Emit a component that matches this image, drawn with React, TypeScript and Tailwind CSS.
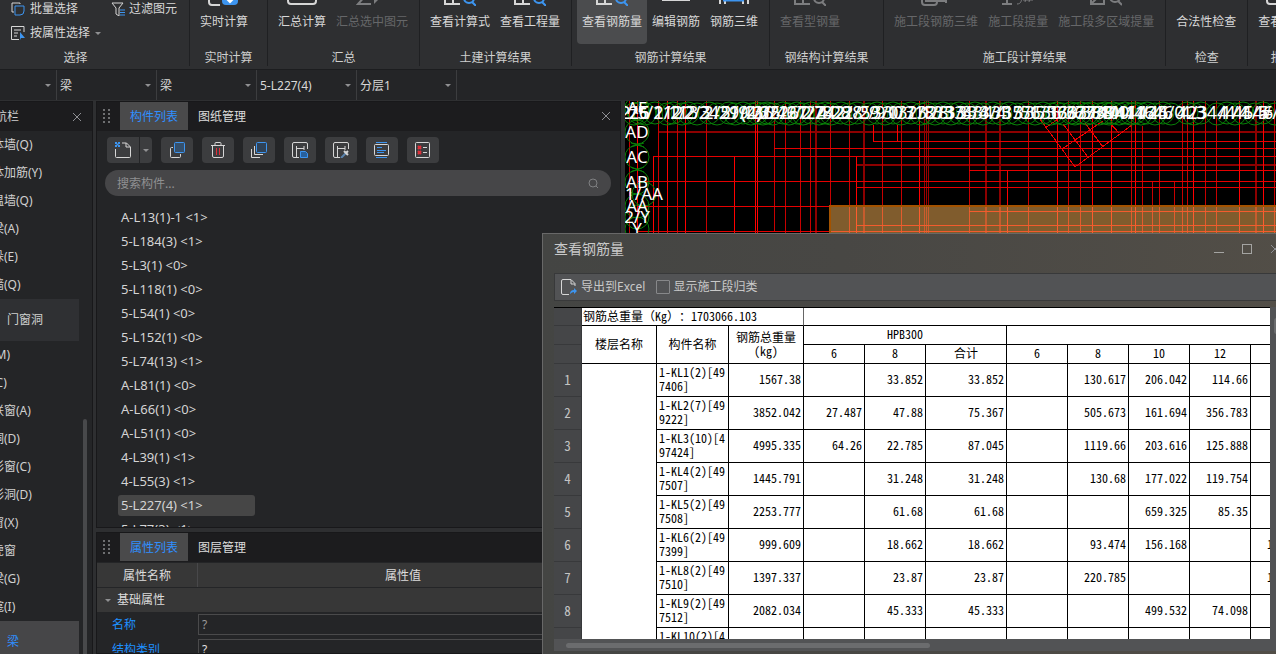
import type { ReactNode } from "react";

const BLUE = "#3d95f0";
const WHITE = "#d6d6d6";
const GRAY = "#7c7d7f";

type RibbonIconName =
  | "realtime"
  | "summary"
  | "sigma"
  | "lookup"
  | "edit"
  | "rebar3d"
  | "stage3d"
  | "stage"
  | "region"
  | "check"
  | "report";

interface RibbonItem {
  label: string;
  icon: RibbonIconName;
  disabled?: boolean;
  active?: boolean;
}

interface RibbonGroupData {
  title: string;
  className?: string;
  items: RibbonItem[];
}

const ribbonGroups: RibbonGroupData[] = [
  {
    title: "实时计算",
    className: "w-[78px]",
    items: [{ label: "实时计算", icon: "realtime" }],
  },
  {
    title: "汇总",
    items: [
      { label: "汇总计算", icon: "summary" },
      { label: "汇总选中图元", icon: "sigma", disabled: true },
    ],
  },
  {
    title: "土建计算结果",
    items: [
      { label: "查看计算式", icon: "lookup" },
      { label: "查看工程量", icon: "lookup" },
    ],
  },
  {
    title: "钢筋计算结果",
    items: [
      { label: "查看钢筋量", icon: "lookup", active: true },
      { label: "编辑钢筋", icon: "edit" },
      { label: "钢筋三维", icon: "rebar3d" },
    ],
  },
  {
    title: "钢结构计算结果",
    className: "w-[114px]",
    items: [{ label: "查看型钢量", icon: "lookup", disabled: true }],
  },
  {
    title: "施工段计算结果",
    items: [
      { label: "施工段钢筋三维", icon: "stage3d", disabled: true },
      { label: "施工段提量", icon: "stage", disabled: true },
      { label: "施工段多区域提量", icon: "region", disabled: true },
    ],
  },
  { title: "检查", items: [{ label: "合法性检查", icon: "check" }] },
  { title: "报表", items: [{ label: "查看报表", icon: "report" }] },
];

const selectors = [
  { name: "楼层", value: "", className: "w-[57px]" },
  { name: "构件大类", value: "梁", className: "w-[100px]" },
  { name: "构件类型", value: "梁", className: "w-[100px]" },
  { name: "构件", value: "5-L227(4)", className: "w-[100px]" },
  { name: "分层", value: "分层1", className: "w-[100px]" },
];

const wallItems = [
  "砌体墙(Q)",
  "砌体加筋(Y)",
  "保温墙(Q)",
  "暗梁(A)",
  "墙垛(E)",
  "幕墙(Q)",
];

const openingItems = [
  "门(M)",
  "窗(C)",
  "门联窗(A)",
  "墙洞(D)",
  "带形窗(C)",
  "带形洞(D)",
  "飘窗(X)",
  "老虎窗",
  "过梁(G)",
  "壁龛(I)",
];

const components = [
  "A-L13(1)-1 <1>",
  "5-L184(3) <1>",
  "5-L3(1) <0>",
  "5-L118(1) <0>",
  "5-L54(1) <0>",
  "5-L152(1) <0>",
  "5-L74(13) <1>",
  "A-L81(1) <0>",
  "A-L66(1) <0>",
  "A-L51(1) <0>",
  "4-L39(1) <1>",
  "4-L55(3) <1>",
  "5-L227(4) <1>",
  "5-L77(3) <1>",
];

const rebarRows: string[][] = [
  ["1-KL1(2)[497406]", "1567.38", "", "33.852", "33.852", "", "130.617", "206.042", "114.66", ""],
  ["1-KL2(7)[499222]", "3852.042", "27.487", "47.88", "75.367", "", "505.673", "161.694", "356.783", ""],
  ["1-KL3(10)[497424]", "4995.335", "64.26", "22.785", "87.045", "", "1119.66", "203.616", "125.888", ""],
  ["1-KL4(2)[497507]", "1445.791", "", "31.248", "31.248", "", "130.68", "177.022", "119.754", ""],
  ["1-KL5(2)[497508]", "2253.777", "", "61.68", "61.68", "", "", "659.325", "85.35", ""],
  ["1-KL6(2)[497399]", "999.609", "", "18.662", "18.662", "", "93.474", "156.168", "", "119.754"],
  ["1-KL8(2)[497510]", "1397.337", "", "23.87", "23.87", "", "220.785", "", "", "130.617"],
  ["1-KL9(2)[497512]", "2082.034", "", "45.333", "45.333", "", "", "499.532", "74.098", ""],
  ["1-KL10(2)[497514]", "", "", "", "", "", "", "", "", ""],
];

function RibbonIcon({ name, color }: { name: RibbonIconName; color: string }) {
  const accent = color === GRAY ? GRAY : BLUE;
  const shapes: Record<RibbonIconName, ReactNode> = {
    realtime: (
      <>
        <path d="M1 6v18q0 3 3 3h8" stroke={color} />
        <rect x="14" y="11" width="16" height="16" rx="4" fill={accent} />
        <path d="M22 15v9m-3-3l3 3 3-3" stroke="#fff" />
      </>
    ),
    summary: <rect x="2" y="4" width="28" height="22" rx="3" stroke={color} />,
    sigma: (
      <>
        <path d="M14 6H3l8 10-9 10h13" stroke={color} />
        <path d="M18 16v10l4-4h6z" fill={color} />
      </>
    ),
    lookup: (
      <>
        <path d="M1 6v20h15M9 6v20" stroke={color} />
        <circle cx="25" cy="20" r="5" stroke={accent} />
        <path d="M28 24l4 4" stroke={accent} />
      </>
    ),
    edit: <path d="M3 6h26v16H3z" stroke={color} />,
    rebar3d: (
      <>
        <path d="M2 8v18M7 8v18M25 8v18M30 8v18" stroke={color} />
        <path d="M5 22h21" stroke={accent} strokeWidth="3" />
      </>
    ),
    stage3d: (
      <>
        <rect x="2" y="10" width="15" height="17" rx="3" stroke={color} />
        <path d="M6 23h20M26 8v17M6 20v3h7" stroke={color} />
      </>
    ),
    stage: (
      <>
        <path d="M0 26h10M5 8v18" stroke={color} />
        <path d="M15 26c4 0 5-3 5-10M23 24l2-8M27 24l2-8M21 22h10" stroke={color} strokeWidth="1" />
      </>
    ),
    region: (
      <>
        <path d="M1 10h13v16H1zM1 26l13-13" stroke={color} />
        <circle cx="25" cy="19" r="5" stroke={color} />
        <path d="M28 23l4 4" stroke={color} />
      </>
    ),
    check: <path d="M6 16l5 6 8-14" stroke={accent} strokeWidth="1" />,
    report: <rect x="1" y="4" width="26" height="22" rx="3" stroke={color} />,
  };
  return (
    <svg width="32" height="28" viewBox="0 0 32 28" fill="none" strokeWidth="2" className="mb-2 shrink-0">
      {shapes[name]}
    </svg>
  );
}

function Caret({ className }: { className?: string }) {
  return (
    <svg width="6" height="3" viewBox="0 0 6 3" className={className}>
      <path d="M0 0h6L3 3z" fill="#8f9092" />
    </svg>
  );
}

function CloseIcon() {
  return (
    <svg width="10" height="10" viewBox="0 0 10 10" stroke="#8e8f93" fill="none">
      <path d="M1 1l8 8M9 1l-8 8" />
    </svg>
  );
}

function Ribbon() {
  return (
    <header className="flex h-[70px] shrink-0 items-end overflow-hidden border-b border-[#1c1d1f] bg-[#2e2f31] pb-[3px]">
      <section className="-ml-[38px] flex h-full w-[228px] shrink-0 flex-col justify-end border-r border-[#1f2022]">
        <div className="mb-[9px] grid gap-2 pl-[49px] text-[#d8d8d8]">
          <div className="flex gap-[33px]">
            <button className="flex h-4 items-center gap-[5px]">
              <svg width="14" height="14" viewBox="0 0 14 14" fill="none">
                <path d="M9 2V1H1v9h2" stroke={WHITE} />
                <path d="M4 4h9v5q0 4-4 4H4z" stroke={BLUE} />
              </svg>
              批量选择
            </button>
            <button className="flex h-4 items-center gap-1">
              <svg width="14" height="14" viewBox="0 0 14 14" fill="none">
                <path d="M1 1h11L8 6v8l-3-2V6z" stroke={WHITE} />
                <path d="M9 8h5M9 10.500h5M9 13h5" stroke={BLUE} />
              </svg>
              过滤图元
            </button>
          </div>
          <button className="flex h-4 items-center gap-[5px]">
            <svg width="14" height="14" viewBox="0 0 14 14" fill="none">
              <path d="M13 6V.500H.500v13H8M3 4h7M3 7h4M3 10h3" stroke={WHITE} />
              <path d="M9 6l5 6h-4l-1 2z" fill={BLUE} />
            </svg>
            按属性选择
            <Caret />
          </button>
        </div>
        <h2 className="text-center text-[#cfcfcf]">选择</h2>
      </section>
      {ribbonGroups.map((group) => (
        <section
          key={group.title}
          className={`flex h-full shrink-0 flex-col justify-end border-r border-[#1f2022] ${group.className ?? ""}`}
        >
          <div className="mb-[6px] flex items-end pr-[6px] pl-[5px]">
            {group.items.map((item) => (
              <button
                key={item.label}
                disabled={item.disabled}
                className={`flex flex-col items-center rounded px-[5px] pb-[14px] ${
                  item.active ? "bg-[#4b4c4e]" : ""
                } ${item.disabled ? "text-[#666769]" : "text-[#d8d8d8]"}`}
              >
                <RibbonIcon name={item.icon} color={item.disabled ? GRAY : WHITE} />
                {item.label}
              </button>
            ))}
          </div>
          <h2 className="text-center text-[#cfcfcf]">{group.title}</h2>
        </section>
      ))}
    </header>
  );
}

function SelectorBar() {
  return (
    <div className="flex h-[30px] shrink-0 bg-[#242527]">
      {selectors.map((s) => (
        <div key={s.name} className={`relative border-r border-[#3c3d3f] ${s.className}`}>
          <select
            aria-label={s.name}
            defaultValue={s.value}
            className="h-full w-full appearance-none bg-transparent pt-px pl-[3px] text-[#d8d8d8] outline-none"
          >
            <option>{s.value}</option>
          </select>
          <Caret className="absolute top-[14px] right-[5px]" />
        </div>
      ))}
    </div>
  );
}

function NavItem({ label }: { label: string }) {
  return (
    <li>
      <a href="#nav" className="flex h-7 items-center">
        {label}
      </a>
    </li>
  );
}

function NavPanel() {
  return (
    <nav className="-ml-5 flex w-[113px] shrink-0 flex-col border-t border-r border-[#18181a] bg-[#242527] text-[#d0d0d0]">
      <div className="flex h-[29px] shrink-0 items-center justify-between bg-[#1c1c1e] pr-[10px] pl-[3px]">
        导航栏
        <button aria-label="关闭导航栏">
          <CloseIcon />
        </button>
      </div>
      <div className="flex min-h-0 flex-1 overflow-hidden">
        <ul className="w-[99px]">
          {wallItems.map((item) => (
            <NavItem key={item} label={item} />
          ))}
          <li className="flex h-[42px] items-center bg-[#2f3033] pl-[27px]">门窗洞</li>
          {openingItems.map((item) => (
            <NavItem key={item} label={item} />
          ))}
          <li className="flex h-[42px] items-center bg-[#464648] pl-[27px] text-[#2f8fff]">梁</li>
        </ul>
        <div className="mt-[288px] ml-1 w-1 rounded-t bg-[#48494b]" />
      </div>
    </nav>
  );
}

function Tabs({ tabs, closable }: { tabs: string[]; closable?: boolean }) {
  return (
    <div className="flex h-[29px] shrink-0 bg-[#1c1c1e] pb-px">
      <svg width="8" height="16" viewBox="0 0 8 16" fill="#6e6f71" className="mt-[7px] mr-[9px] ml-[6px]">
        {[0, 4, 8, 12].map((y) => (
          <path key={y} d={`M0 ${y}h2v2h-2zM5 ${y}h2v2h-2z`} />
        ))}
      </svg>
      {tabs.map((tab, i) => (
        <button
          key={tab}
          className={`w-[68px] pt-[2px] ${i === 0 ? "bg-[#4a4a4b] text-[#2f8fff]" : "text-[#dcdcdc]"}`}
        >
          {tab}
        </button>
      ))}
      {closable && (
        <button aria-label="关闭" className="mr-[9px] ml-auto">
          <CloseIcon />
        </button>
      )}
    </div>
  );
}

const toolIcons: { name: string; drawing: ReactNode }[] = [
  {
    name: "复制",
    drawing: (
      <>
        <path d="M4 5.500H2.500q-1 0-1 1v8q0 1 1 1h8q1 0 1-1V12" stroke={WHITE} />
        <rect x="5.500" y=".500" width="10" height="10" rx="1" fill="#36506b" stroke={BLUE} />
      </>
    ),
  },
  {
    name: "删除",
    drawing: (
      <>
        <path d="M1 3.500h14M5 3V1.500q0-1 1-1h4q1 0 1 1V3M2.500 4v10q0 1.500 1.500 1.500h8q1.500 0 1.500-1.500V4" stroke={WHITE} />
        <path d="M6.500 6v7M9.500 6v7" stroke="#e0303a" />
      </>
    ),
  },
  {
    name: "层间复制",
    drawing: (
      <>
        <path d="M.500 7v8.500H9M3.500 4v8.500H12" stroke={WHITE} />
        <rect x="5.500" y=".500" width="10" height="10" rx="1" fill="#2f4257" stroke={BLUE} />
      </>
    ),
  },
  {
    name: "存档",
    drawing: (
      <>
        <path d="M7 15.500H2q-1.500 0-1.500-1.500V2Q.500.500 2 .500h12q1.500 0 1.500 1.500v5M4.500 15V4M4.500 6.500H12M12 4v4" stroke={WHITE} />
        <path d="M8.500 9.500h5l2 2v4h-7z" fill="#28609c" stroke={BLUE} />
      </>
    ),
  },
  {
    name: "提取",
    drawing: (
      <>
        <path d="M7 15.500H2q-1.500 0-1.500-1.500V2Q.500.500 2 .500h12q1.500 0 1.500 1.500v5M4.500 15V4M4.500 6.500H12M12 4v4" stroke={WHITE} />
        <path d="M8 16l5-5" stroke="#5b83ad" strokeWidth="2" />
        <path d="M11 9l4 4M12.500 11.500L15 9" stroke={WHITE} strokeWidth="2" />
      </>
    ),
  },
  {
    name: "过滤",
    drawing: (
      <>
        <rect x=".500" y="2.500" width="14" height="11" rx="1" stroke={WHITE} />
        <path d="M2 .500h11M2 15.500h11M3 5.500h5M3 8.500h9M3 10.500h7" stroke={BLUE} />
      </>
    ),
  },
  {
    name: "检查",
    drawing: (
      <>
        <rect x=".500" y=".500" width="14" height="15" rx="1" stroke={WHITE} />
        <path d="M8 5.500h4M8 10.500h4" stroke={WHITE} />
        <path d="M3 4l3 3M6 4L3 7M3 9l3 3M6 9l-3 3" stroke="#e0303a" strokeWidth="2" />
      </>
    ),
  },
];

function ComponentPanel() {
  return (
    <section className="flex h-[427px] shrink-0 flex-col overflow-hidden border border-[#18181a] bg-[#242527]">
      <Tabs tabs={["构件列表", "图纸管理"]} closable />
      <div className="mt-[6px] flex shrink-0 gap-[9px] pl-[10px]">
        <div className="flex gap-px">
          <button aria-label="新建" className="flex h-[26px] w-8 items-center justify-center rounded-l bg-[#3c3d3f]">
            <svg width="16" height="16" viewBox="0 0 16 16" fill="none">
              <path d="M.500 7v7.500q0 1 1 1h13q1 0 1-1V5l-4-4H7M11 1v4h4" stroke={WHITE} />
              <path d="M0 0h2v2H0zM3 0h2v2H3zM1.500 1.500h2v2h-2zM0 3h2v2H0zM3 3h2v2H3z" fill={BLUE} />
            </svg>
          </button>
          <button aria-label="新建选项" className="flex h-[26px] w-3 items-center justify-center rounded-r bg-[#3c3d3f]">
            <Caret />
          </button>
        </div>
        {toolIcons.map((tool) => (
          <button
            key={tool.name}
            aria-label={tool.name}
            className="flex h-[26px] w-8 items-center justify-center rounded bg-[#3c3d3f]"
          >
            <svg width="16" height="16" viewBox="0 0 16 16" fill="none">
              {tool.drawing}
            </svg>
          </button>
        ))}
      </div>
      <label className="mr-[9px] ml-2 mt-[7px] flex h-[26px] shrink-0 items-center rounded-full bg-[#464648] px-3">
        <input
          type="text"
          aria-label="搜索构件"
          placeholder="搜索构件..."
          className="min-w-0 flex-1 bg-transparent pt-[2px] outline-none placeholder:text-[#8f9092]"
        />
        <svg width="11" height="11" viewBox="0 0 11 11" fill="none" stroke="#7f8082">
          <circle cx="5" cy="5" r="4" />
          <path d="M8 8l2 2" />
        </svg>
      </label>
      <ul className="mt-[9px] text-[13px] text-[#d4d4d4]">
        {components.map((item) => (
          <li key={item} className="flex h-6 items-center pl-[21px]">
            <span
              className={`w-[137px] rounded-[3px] pl-[3px] leading-[21px] ${
                item.startsWith("5-L227") ? "bg-[#464646]" : ""
              }`}
            >
              {item}
            </span>
          </li>
        ))}
      </ul>
    </section>
  );
}

function PropertyRow({ label, value, dim }: { label: string; value: string; dim?: boolean }) {
  return (
    <label className="flex h-[25px] shrink-0 items-center text-[#1e90ff]">
      <span className="w-[101px] pt-px pl-[15px]">{label}</span>
      <input
        type="text"
        defaultValue={value}
        className={`h-[21px] min-w-0 flex-1 border border-[#4a4a4b] bg-transparent px-[3px] outline-none ${
          dim ? "text-[#9a9a9a]" : "text-[#e0e0e0]"
        }`}
      />
    </label>
  );
}

function PropertyPanel() {
  return (
    <section className="mt-1 flex flex-1 flex-col overflow-hidden border border-[#18181a] bg-[#242527]">
      <Tabs tabs={["属性列表", "图层管理"]} />
      <div className="mt-px flex h-6 shrink-0 bg-[#373737] text-center leading-[26px] text-[#dcdcdc]">
        <span className="w-[101px] border-r border-[#48484a]">属性名称</span>
        <span className="flex-1 pr-3">属性值</span>
      </div>
      <button className="mt-px flex h-6 shrink-0 items-center gap-[6px] bg-[#373737] pl-2 text-[#dcdcdc]">
        <Caret />
        基础属性
      </button>
      <PropertyRow label="名称" value="?" dim />
      <PropertyRow label="结构类别" value="?" />
    </section>
  );
}

// grid lines of the drawing: [x, y1, y2]
const brightColumns = [
  [12, 0, 134], [28, 56, 134], [42, 0, 134], [60, 0, 134], [109, 56, 134],
  [130, 0, 134], [132, 0, 134], [248, 24, 40], [272, 24, 40], [294, 0, 134],
  [382, 69, 134], [432, 0, 134], [467, 0, 134], [486, 0, 134], [510, 0, 134],
  [568, 0, 134], [614, 0, 134], [638, 0, 134], [231, 56, 134],
];
const columns = [
  [4, 0, 134], [33, 0, 134], [52, 0, 134], [81, 0, 134], [149, 0, 130],
  [160, 0, 134], [175, 0, 134], [185, 0, 134], [205, 0, 134], [224, 0, 134],
  [257, 0, 134], [276, 0, 134], [344, 0, 134], [403, 0, 134], [443, 0, 134],
  [455, 0, 134], [506, 0, 134], [517, 25, 134], [527, 80, 134], [534, 0, 134],
  [549, 80, 134], [557, 0, 134], [562, 0, 134], [580, 0, 134], [591, 0, 134],
  [649, 0, 134],
];
const thickColumns = [191, 239, 361, 375, 631];
const darkColumns = [299, 301, 303];
// horizontal lines: [y, x1]
const rows = [
  [40, 248], [47, 149], [55, 28], [69, 344], [80, 12], [86, 231], [105, 12],
  [110, 344], [124, 231], [130, 12],
];
const axisLabels: [number, string][] = [
  [9, "2/5"], [14, "26"], [20, "5"], [30, "/2"], [42, "1/2"], [48, "12"],
  [57, "1/2"], [63, "13"], [72, "2/3"], [84, "24"], [92, "2/5"], [104, "29"],
  [110, "2/9"], [118, "1/4"], [126, "(2)"], [132, "1/2"], [138, "26"], [142, "3/5"],
  [148, "3/4"], [158, "2/6"], [164, "26"], [172, "27"], [178, "/2"], [186, "1/7"],
  [194, "2/8"], [200, "24"], [206, "4/2"], [216, "28"], [224, "2/8"], [232, "2/5"],
  [244, "29"], [252, "/9"], [260, "3/0"], [268, "30"], [276, "1/3"], [286, "3/1"],
  [296, "2/8"], [302, "32"], [310, "1/8"], [318, "33"], [326, "/33"], [334, "3/4"],
  [342, "33"], [350, "3/4"], [358, "34"], [368, "3/4"], [376, "35"], [384, "/35"],
  [392, "1/5"], [402, "3/6"], [410, "35"], [418, "1/5"], [426, "36"], [432, "36"],
  [438, "1/6"], [446, "3/6"], [450, "37"], [456, "3/7"], [462, "37"], [466, "38"],
  [474, "3/8"], [480, "39"], [484, "40"], [488, "1/4"], [494, "40"], [500, "41"],
  [506, "1/4"], [510, "41"], [516, "1/6"], [522, "42"], [530, "/45"], [538, "46"],
  [546, "4/0"], [562, "42"], [569, "4/3"], [576, "3"], [592, "44"], [602, "/4"],
  [610, "1/4"], [618, "45"], [630, "4/5"], [638, "46"], [650, "#/4"],
];
const sideLabels: [number, number, string][] = [
  [12, 7, "AF"], [12, 31, "AD"], [12, 56, "AC"], [12, 81, "AB"], [19, 93, "1/AA"],
  [12, 105, "AA"], [12, 116, "2/Y"], [12, 128, "Y"],
];

function Drawing() {
  return (
    <main className="min-w-0 flex-1 overflow-hidden bg-black">
      <svg width="1200" height="560" viewBox="0 0 1200 560" fill="none" className="max-w-none">
        <g shapeRendering="crispEdges">
          <path d="M34 31H1200" stroke="#8c0000" strokeWidth="2" />
          <path d="M231 64H1200" stroke="#8c0000" strokeWidth="2" />
          {thickColumns.map((x) => (
            <path key={x} d={`M${x} 0V134`} stroke="#8c0000" strokeWidth="2" />
          ))}
          {darkColumns.map((x) => (
            <path key={x} d={`M${x + 0.5} 0V134`} stroke="#9a0000" />
          ))}
          {columns.map(([x, y1, y2]) => (
            <path key={x} d={`M${x + 0.5} ${y1}V${y2}`} stroke="#c80000" />
          ))}
          {brightColumns.map(([x, y1, y2]) => (
            <path key={x} d={`M${x + 0.5} ${y1}V${y2}`} stroke="#ff0000" />
          ))}
          {rows.map(([y, x1]) => (
            <path key={y} d={`M${x1} ${y + 0.5}H1200`} stroke="#e60000" />
          ))}
          <path
            d="M412 14L450 66L507 24M420 27L436 16M437 48L478 20M438 23L463 56M460 22L478 46M485 22L494 32"
            stroke="#f00000"
          />
          <rect x="204" y="104" width="996" height="40" fill="#ffb85a" fillOpacity=".5" />
          <path d="M204.500 140V105H1200" stroke="#a35200" strokeWidth="2" />
        </g>
        <g stroke="#088008">
          {axisLabels.map(([x], i) => (
            <path key={i} d={`M${x - 11} ${i % 2 ? 12 : 13}a11 11 0 1 0 22 0a11 11 0 1 0 -22 0`} />
          ))}
          {sideLabels.map(([x, y, label]) => (
            <circle key={label} cx={x} cy={y} r="12" />
          ))}
          <path d="M6 42L19 46M6 46L19 42M6 66L19 71M6 71L19 66" />
        </g>
        <g fill="#fff" fontSize="18" textAnchor="middle" fontFamily="'Noto Sans', sans-serif">
          {axisLabels.map(([x, label], i) => (
            <text key={i} x={x} y="18">
              {label}
            </text>
          ))}
        </g>
        <g fill="#fff" fontSize="17" textAnchor="middle" fontFamily="'Noto Sans', sans-serif">
          {sideLabels.map(([x, y, label]) => (
            <text key={label} x={x} y={y + 6}>
              {label}
            </text>
          ))}
        </g>
      </svg>
    </main>
  );
}

const rowHead = "border-r border-b border-[#38393b] bg-[#454648] p-0 text-[13px] font-normal text-[#c4c4c4]";
const cell = "border-r border-b border-black pt-0 pb-[2px] font-normal";

function RebarTable() {
  return (
    <table className="w-[758px] table-fixed border-separate border-spacing-0 bg-white leading-[14px] text-black">
      <colgroup>
        <col className="w-[28px]" />
        <col className="w-[75px]" />
        <col className="w-[72px]" />
        <col className="w-[75px]" />
        <col className="w-[61px]" />
        <col className="w-[61px]" />
        <col className="w-[81px]" />
        <col className="w-[61px]" />
        <col className="w-[61px]" />
        <col className="w-[61px]" />
        <col className="w-[61px]" />
        <col className="w-[61px]" />
      </colgroup>
      <thead>
        <tr className="h-[18px]">
          <th className={rowHead} />
          <th
            colSpan={3}
            className="border-r border-b border-r-[#666] border-b-black pt-0 pr-0 pb-[2px] pl-px text-left font-normal whitespace-nowrap [font-feature-settings:normal] [text-spacing-trim:space-all]"
          >
            钢筋总重量（<span className="[font-feature-settings:'hwid']">Kg</span>）：
            <span className="[font-feature-settings:'hwid']">1703066.103</span>
          </th>
          <th colSpan={8} className={cell} />
        </tr>
        <tr className="h-[19px]">
          <th className={rowHead} />
          <th rowSpan={2} className={cell}>楼层名称</th>
          <th rowSpan={2} className={cell}>构件名称</th>
          <th rowSpan={2} className={cell}>钢筋总重量(kg)</th>
          <th colSpan={3} className={cell}>HPB300</th>
          <th colSpan={5} className={cell} />
        </tr>
        <tr className="h-[19px]">
          <th className={rowHead} />
          {["6", "8", "合计", "6", "8", "10", "12", "14"].map((d, i) => (
            <th key={i} className={cell}>
              {d}
            </th>
          ))}
        </tr>
      </thead>
      <tbody>
        {rebarRows.map(([name, ...values], i) => (
          <tr key={name} className="h-[33px]">
            <th className={rowHead}>{i < 8 ? i + 1 : ""}</th>
            {i === 0 && <td rowSpan={rebarRows.length} className={cell} />}
            <td className={`${cell} pr-0 pl-[2px] break-all`}>{name}</td>
            {values.map((value, j) => (
              <td key={j} className={`${cell} pr-[2px] text-right`}>
                {value}
              </td>
            ))}
          </tr>
        ))}
      </tbody>
    </table>
  );
}

function RebarDialog() {
  return (
    <div
      role="dialog"
      aria-label="查看钢筋量"
      className="absolute top-[233px] -right-[18px] -bottom-2 left-[542px] flex flex-col border border-[#686868] bg-linear-to-r from-[#444543] via-[#484744] via-40% to-[#524e47] px-[11px]"
    >
      <div className="flex h-[39px] shrink-0 items-center justify-between pb-[10px] text-sm text-[#c9c9c9]">
        查看钢筋量
        <div className="flex items-center gap-[18px] pr-[2px]">
          <button aria-label="最小化">
            <svg width="10" height="10" viewBox="0 0 10 10" stroke="#a4a4a2">
              <path d="M0 8.500h10" />
            </svg>
          </button>
          <button aria-label="最大化">
            <svg width="10" height="10" viewBox="0 0 10 10" fill="none" stroke="#a4a4a2">
              <rect x=".500" y=".500" width="9" height="9" />
            </svg>
          </button>
          <button aria-label="关闭">
            <CloseIcon />
          </button>
        </div>
      </div>
      <div className="flex h-7 shrink-0 items-center gap-[11px] border border-[#38393a] bg-[#525355] pl-[6px] text-[#c9c9c9]">
        <button className="flex items-center gap-1">
          <svg width="16" height="16" viewBox="0 0 16 16" fill="none">
            <path d="M8 15.500H2q-1.500 0-1.500-1.500V2Q.500.500 2 .500h8l4 4V7M10 1v4h4" stroke={WHITE} />
            <path d="M9 15q0-4 4-4V9l3 3-3 3v-2q-2 0-4 2z" fill={BLUE} />
          </svg>
          导出到Excel
        </button>
        <label className="flex items-center gap-[3px]">
          <input type="checkbox" className="h-[14px] w-[14px] appearance-none rounded-[1px] border border-[#87888a]" />
          显示施工段归类
        </label>
      </div>
      <div className="mt-[6px] flex h-[332px] shrink-0">
        <div className="min-w-0 flex-1 overflow-hidden border-t border-black font-['Noto_Sans_CJK_SC',sans-serif] [font-feature-settings:'hwid']">
          <RebarTable />
        </div>
        <div className="w-3 bg-[#525355] pt-[11px] pl-1">
          <div className="h-4 w-[5px] rounded bg-[#6b6c6e]" />
        </div>
      </div>
      <div className="h-3 shrink-0 bg-[#525355] px-3 pt-[4px]">
        <div className="h-[5px] w-[364px] rounded bg-[#6b6c6e]" />
      </div>
    </div>
  );
}

export default function App() {
  return (
    <div
      lang="zh-CN"
      className="relative flex h-screen flex-col overflow-hidden bg-[#2e2f31] font-['Noto_Sans','Noto_Sans_CJK_SC',sans-serif] text-xs"
    >
      <Ribbon />
      <SelectorBar />
      <div className="mt-px flex min-h-0 flex-1">
        <NavPanel />
        <div className="ml-[3px] flex w-[525px] shrink-0 flex-col">
          <ComponentPanel />
          <PropertyPanel />
        </div>
        <div className="w-1 shrink-0" />
        <Drawing />
      </div>
      <RebarDialog />
    </div>
  );
}
